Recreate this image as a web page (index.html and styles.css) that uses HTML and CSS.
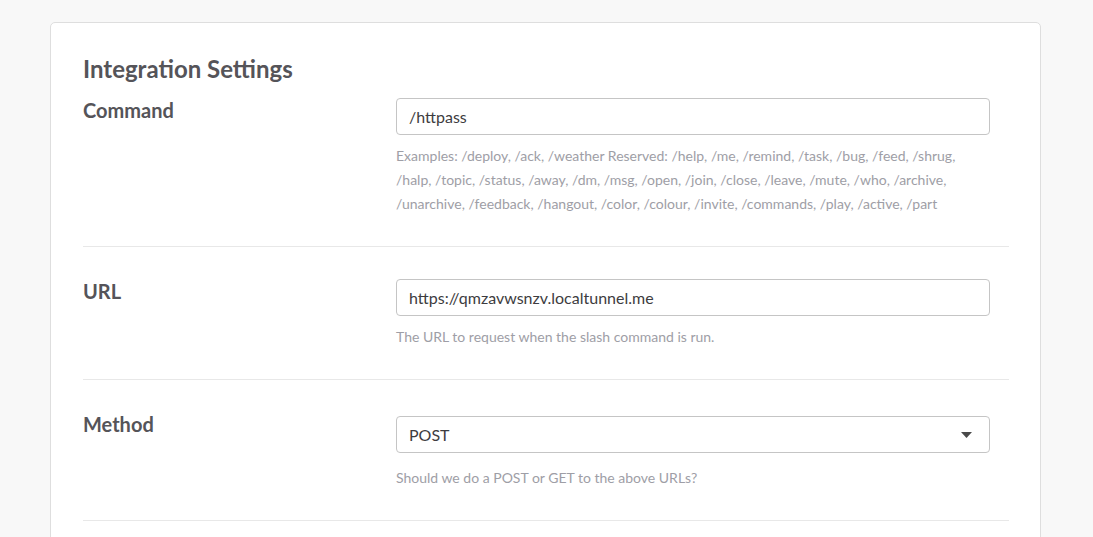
FILE: index.html
```html
<!DOCTYPE html>
<html>
<head>
<meta charset="utf-8">
<link rel="stylesheet" href="styles.css">
</head>
<body>
<div class="card">
  <h2 class="title">Integration Settings</h2>
  <div class="row row-first">
    <div class="label">Command</div>
    <div class="field">
      <div class="input">/httpass</div>
      <p class="help">Examples: /deploy, /ack, /weather Reserved: /help, /me, /remind, /task, /bug, /feed, /shrug, /halp, /topic, /status, /away, /dm, /msg, /open, /join, /close, /leave, /mute, /who, /archive, /unarchive, /feedback, /hangout, /color, /colour, /invite, /commands, /play, /active, /part</p>
    </div>
  </div>
  <div class="row">
    <div class="label">URL</div>
    <div class="field">
      <div class="input">https://qmzavwsnzv.localtunnel.me</div>
      <p class="help">The URL to request when the slash command is run.</p>
    </div>
  </div>
  <div class="row">
    <div class="label">Method</div>
    <div class="field">
      <div class="input select">POST<svg class="caret" width="11" height="6" viewBox="0 0 11 6"><path d="M0 0 H11 L5.5 6 Z" fill="#4a4a4a"/></svg></div>
      <p class="help help-select">Should we do a POST or GET to the above URLs?</p>
    </div>
  </div>
</div>
</body>
</html>
```

FILE: styles.css
```css
html, body {
  margin: 0;
  padding: 0;
  background: #f8f8f8;
  font-family: Lato, "Open Sans", sans-serif;
  height: 537px;
  overflow: hidden;
}
.card {
  margin: 22px 0 0 50px;
  width: 926px;
  padding: 32px 31px 40px 32px;
  background: #fff;
  border: 1px solid #dedede;
  border-radius: 5px;
}
.title {
  margin: 0;
  font-size: 24px;
  line-height: 28px;
  font-weight: 700;
  color: #555459;
}
.row {
  display: grid;
  grid-template-columns: 313px 594px;
  padding: 32px 0 30px;
  border-bottom: 1px solid #e8e8e8;
}
.row-first {
  padding-top: 15px;
}
.label {
  font-size: 20px;
  line-height: 24px;
  font-weight: 700;
  color: #555459;
}
.input {
  box-sizing: border-box;
  height: 37px;
  border: 1px solid #c5c5c5;
  border-radius: 4px;
  padding: 0 12px;
  font-size: 16px;
  line-height: 35px;
  color: #3d3c40;
}
.select {
  margin-top: 4px;
  display: flex;
  justify-content: space-between;
  align-items: center;
}
.caret {
  margin-right: 5px;
  margin-top: 1px;
}
.help {
  margin: 9px 0 0;
  font-size: 14px;
  line-height: 24px;
  color: #9e9ea6;
}
.help-select {
  margin-top: 13px;
}
```
